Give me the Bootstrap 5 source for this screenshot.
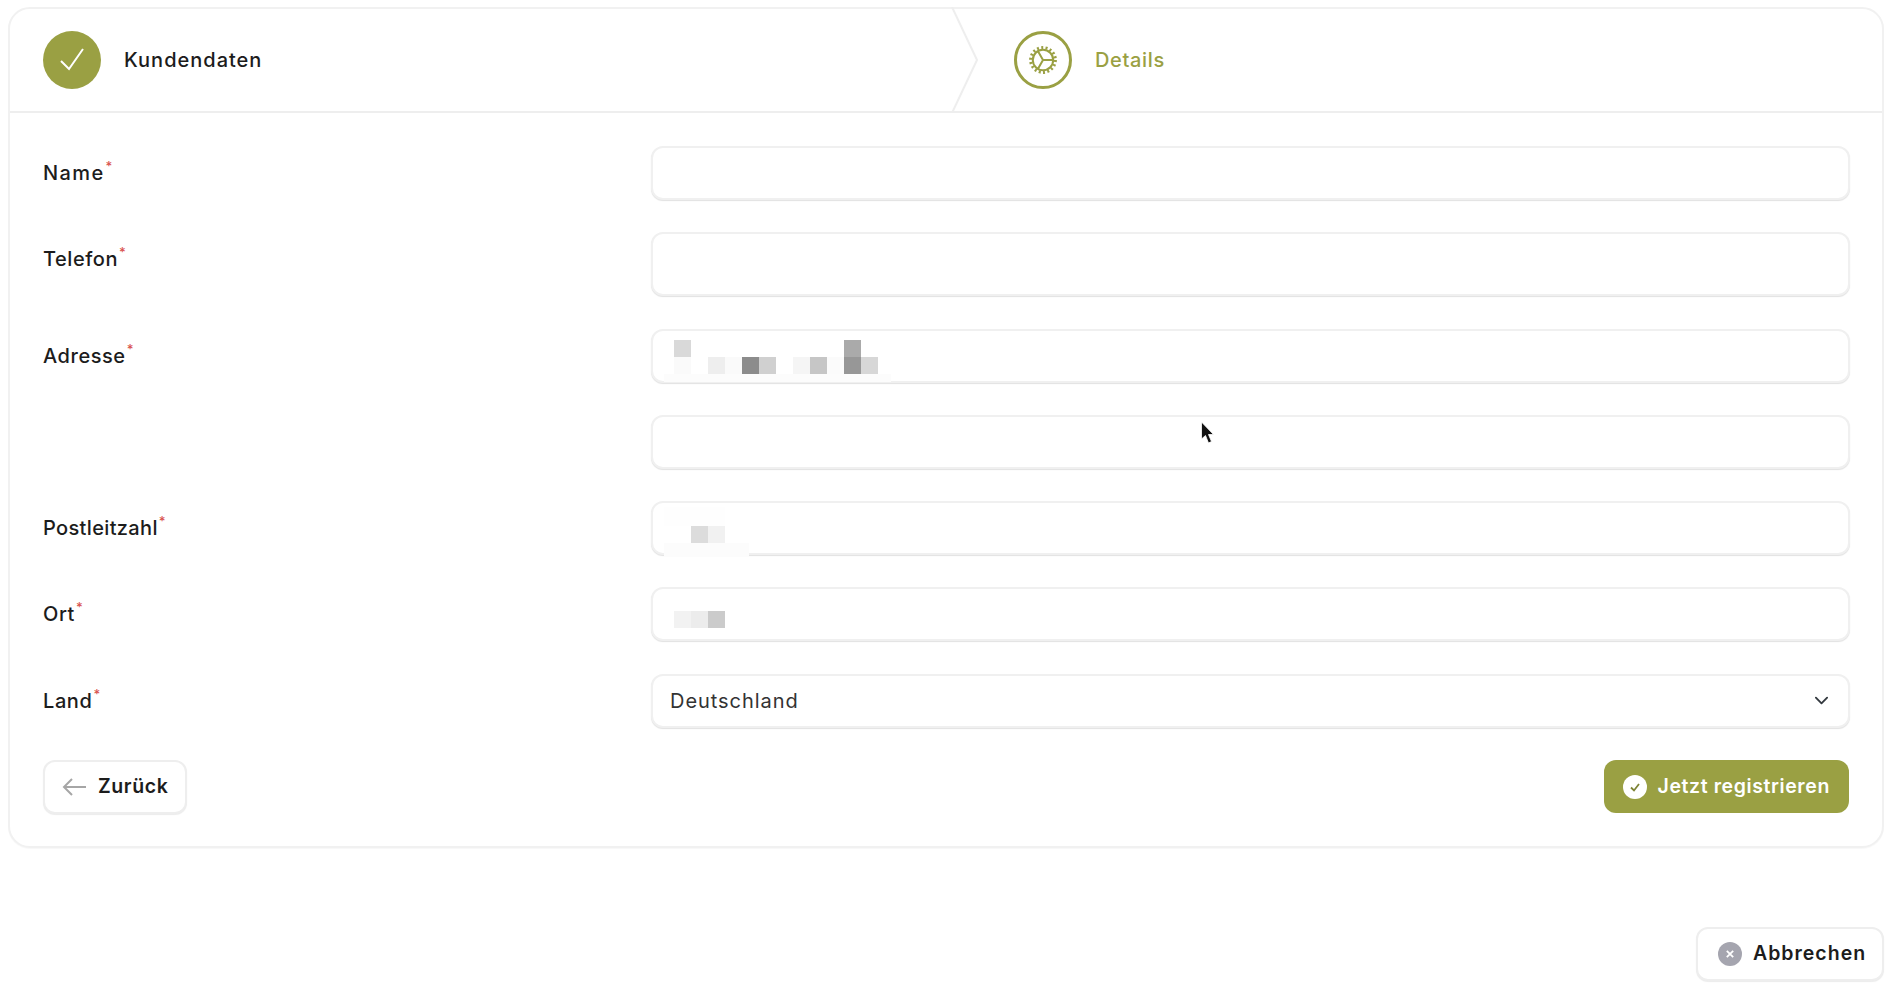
<!DOCTYPE html>
<html lang="de">
<head>
<meta charset="utf-8">
<title>Registrierung</title>
<link href="https://cdn.jsdelivr.net/npm/bootstrap@5.3.0/dist/css/bootstrap.min.css" rel="stylesheet">
<style>
html,body{height:100%;overflow:hidden;}
body{background:#fff;font-family:"Inter","Liberation Sans",sans-serif;color:#1c1c1c;font-size:18px;}
.shell{padding:7px 7px 0 8px;position:relative;height:986px;}
.wiz{border:2px solid #f1f1f1;border-radius:22px;background:#fff;height:841px;box-shadow:0 1px 1px rgba(0,0,0,.03);}
.wiz-head{height:104px;border-bottom:2px solid #eeeeee;position:relative;}
.stepcell{height:100%;}
.stepcell-a{width:1004px;padding-left:33px;}
.step-dot{width:58px;height:58px;border-radius:50%;flex:none;}
.step-done{background:#9aa043;}
.step-open{border:3px solid #9aa043;background:#fff;}
.step-name{margin-left:23px;font-size:20px;font-weight:500;letter-spacing:1px;}
.step-active{color:#9aa043;letter-spacing:.65px;}
.step-tip{position:absolute;left:941px;top:-2px;}
.wiz-body{padding:33px 32px 0 33px;}
.frow{margin-bottom:32.3px;}
.flabel{width:608px;flex:none;line-height:54px;font-size:20px;font-weight:500;letter-spacing:.55px;}
.flabel sup{color:#d9534f;font-size:13px;top:-.7em;margin-left:1px;}
.lbl-tight{letter-spacing:.35px;}
.lbl-mid{letter-spacing:.6px;}
.lbl-wide{letter-spacing:1.4px;}
.finput{flex:1;position:relative;}
.form-control.soft,.form-select.soft{height:54px;border:2px solid #f0f0f0;border-radius:12px;box-shadow:0 1px 1px rgba(0,0,0,.12);font-size:20px;color:#333;padding-left:17px;letter-spacing:.95px;}
.form-select.soft{background-position:right 17px center;background-size:19px 15px;}
.form-control.tall{height:64px;}
.mosaic{position:absolute;left:0;top:0;pointer-events:none;}
.btn-soft{height:54px;border:2px solid #eeeeee;border-radius:12px;background:#fff;font-weight:600;font-size:19.5px;color:#1c1c1c;box-shadow:0 1px 1px rgba(0,0,0,.08);display:inline-flex;align-items:center;letter-spacing:.6px;}
.btn-back{width:144px;padding:0 0 0 17px;gap:11px;}
.btn-go{width:245px;height:53px;background:#9aa043;border:0;border-radius:12px;color:#fff;font-weight:600;font-size:19.5px;letter-spacing:.6px;display:inline-flex;align-items:center;padding:0 0 0 19px;gap:11px;margin-right:1.500px;}
.btn-go:hover{background:#9aa043;color:#fff;}
.btn-stop{width:188px;padding:0 0 0 20px;gap:11px;letter-spacing:1px;}
.foot{margin-top:79px;}
.ptr{position:absolute;left:1200px;top:421px;}
</style>
</head>
<body>
<div class="shell">
  <div class="wiz">
    <div class="wiz-head d-flex">
      <div class="stepcell stepcell-a d-flex align-items-center">
        <span class="step-dot step-done d-flex align-items-center justify-content-center">
          <svg width="28" height="26" viewBox="0 0 28 26"><path d="M3 14l8 8L25 2" fill="none" stroke="#fff" stroke-width="2"/></svg>
        </span>
        <span class="step-name">Kundendaten</span>
      </div>
      <div class="stepcell d-flex align-items-center">
        <span class="step-dot step-open d-flex align-items-center justify-content-center">
          <svg width="30" height="30" viewBox="0 0 30 30"><circle cx="15" cy="15" r="12.4" fill="none" stroke="#9aa043" stroke-width="3" stroke-dasharray="2 2.33"/><circle cx="15" cy="15" r="10.2" fill="none" stroke="#9aa043" stroke-width="2"/><path d="M15 15H25M15 15L10 6.3M15 15L10 23.7" fill="none" stroke="#9aa043" stroke-width="2"/></svg>
        </span>
        <span class="step-name step-active">Details</span>
      </div>
      <svg class="step-tip" width="28" height="106" viewBox="0 0 28 106"><path d="M1 0L26 53L1 106" fill="none" stroke="#eeeeee" stroke-width="2"/></svg>
    </div>
    <form class="wiz-body">
      <div class="frow d-flex"><label class="flabel lbl-wide">Name<sup>*</sup></label><div class="finput"><input class="form-control soft" type="text"></div></div>
      <div class="frow d-flex"><label class="flabel">Telefon<sup>*</sup></label><div class="finput"><input class="form-control soft tall" type="text"></div></div>
      <div class="frow d-flex"><label class="flabel">Adresse<sup>*</sup></label><div class="finput"><input class="form-control soft" type="text">
        <svg class="mosaic" width="260" height="54" viewBox="0 0 260 54" shape-rendering="crispEdges">
          <rect x="23" y="11" width="17" height="17" fill="#d9d9d9"/><rect x="193" y="11" width="17" height="17" fill="#aaaaaa"/>
          <rect x="23" y="28" width="17" height="17" fill="#fafafa"/><rect x="57" y="28" width="17" height="17" fill="#eeeeee"/><rect x="74" y="28" width="17" height="17" fill="#fafafa"/><rect x="91" y="28" width="17" height="17" fill="#8c8c8c"/><rect x="108" y="28" width="17" height="17" fill="#d0d0d0"/><rect x="142" y="28" width="17" height="17" fill="#f5f5f5"/><rect x="159" y="28" width="17" height="17" fill="#c6c6c6"/><rect x="176" y="28" width="17" height="17" fill="#fbfbfb"/><rect x="193" y="28" width="17" height="17" fill="#979797"/><rect x="210" y="28" width="17" height="17" fill="#d7d7d7"/>
          <rect x="13" y="45" width="227" height="8" fill="#fcfcfc"/>
        </svg></div></div>
      <div class="frow d-flex"><div class="flabel"></div><div class="finput"><input class="form-control soft" type="text"></div></div>
      <div class="frow d-flex"><label class="flabel lbl-tight">Postleitzahl<sup>*</sup></label><div class="finput"><input class="form-control soft" type="text">
        <svg class="mosaic" width="120" height="56" viewBox="0 0 120 56" shape-rendering="crispEdges">
          <rect x="13" y="6" width="61" height="19" fill="#fefefe"/><rect x="40" y="25" width="17" height="17" fill="#dcdcdc"/><rect x="57" y="25" width="17" height="17" fill="#f1f1f1"/><rect x="13" y="42" width="85" height="13" fill="#fcfcfc"/>
        </svg></div></div>
      <div class="frow d-flex"><label class="flabel">Ort<sup>*</sup></label><div class="finput"><input class="form-control soft" type="text">
        <svg class="mosaic" width="90" height="54" viewBox="0 0 90 54" shape-rendering="crispEdges">
          <rect x="23" y="24" width="17" height="17" fill="#f2f2f2"/><rect x="40" y="24" width="17" height="17" fill="#ececec"/><rect x="57" y="24" width="17" height="17" fill="#cbcbcb"/>
        </svg></div></div>
      <div class="frow d-flex"><label class="flabel lbl-mid">Land<sup>*</sup></label><div class="finput"><select class="form-select soft"><option>Deutschland</option></select></div></div>
      <div class="d-flex justify-content-between align-items-start">
        <button type="button" class="btn btn-soft btn-back">
          <svg width="25" height="20" viewBox="0 0 25 20"><path d="M24 10H2M10 2L2 10L10 18" fill="none" stroke="#a6a6a6" stroke-width="2"/></svg>Zurück
        </button>
        <button type="button" class="btn btn-go">
          <svg width="24" height="24" viewBox="0 0 24 24"><circle cx="12" cy="12" r="12" fill="#fff"/><path d="M8 12.500l3 3 5-6.500" fill="none" stroke="#7d8335" stroke-width="1.8"/></svg>Jetzt registrieren
        </button>
      </div>
    </form>
  </div>
  <div class="foot d-flex justify-content-end">
    <button type="button" class="btn btn-soft btn-stop">
      <svg width="24" height="24" viewBox="0 0 24 24"><circle cx="12" cy="12" r="12" fill="#a5a5af"/><path d="M8.800 8.800l6.400 6.400M15.200 8.800l-6.400 6.400" stroke="#fff" stroke-width="1.8"/></svg>Abbrechen
    </button>
  </div>
  <svg class="ptr" width="16" height="24" viewBox="0 0 16 24"><path d="M1.500 1V18L5.500 14.500L8.500 22L11.500 20.500L8.500 13.500H13.500Z" fill="#111" stroke="#fff" stroke-width="0.8"/></svg>
</div>
</body>
</html>
